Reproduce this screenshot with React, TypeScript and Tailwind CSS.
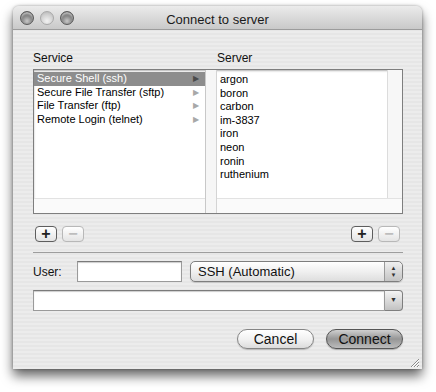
import React from 'react';

const services = [
  'Secure Shell (ssh)',
  'Secure File Transfer (sftp)',
  'File Transfer (ftp)',
  'Remote Login (telnet)',
];

const servers = ['argon', 'boron', 'carbon', 'im-3837', 'iron', 'neon', 'ronin', 'ruthenium'];

const font = { fontFamily: '"Liberation Sans", Arial, sans-serif' };

function Light() {
  return (
    <span className="block h-[14px] w-[14px] rounded-full border border-[#5a5a5a] bg-[radial-gradient(circle_at_50%_75%,#c8c8c8_0%,#7a7a7a_55%,#505050_100%)] shadow-[inset_0_2px_2px_rgba(255,255,255,0.55)]" />
  );
}

function SmallButton({ label, enabled }: { label: string; enabled: boolean }) {
  return (
    <div
      className={`flex h-[16px] w-[22px] items-center justify-center rounded-[4px] border bg-gradient-to-b from-white to-[#e4e4e4] text-[16px] font-bold leading-none ${
        enabled ? 'border-[#5e5e5e] text-[#222]' : 'border-[#b8b8b8] text-[#bdbdbd]'
      }`}
    >
      {label}
    </div>
  );
}

export default function App() {
  return (
    <div className="h-[392px] w-[436px] bg-white pl-[13px] pt-[6px]" style={font}>
      <div className="flex h-[363px] w-[409px] flex-col rounded-t-[6px] bg-[#ececec] shadow-[0_7px_12px_rgba(0,0,0,0.6),0_0_3px_rgba(0,0,0,0.35)]">
        {/* title bar */}
        <div className="relative flex h-[24px] items-center rounded-t-[6px] border-b border-[#9c9c9c] bg-gradient-to-b from-[#ebebeb] to-[#c9c9c9] px-[7px]">
          <div className="flex gap-[6px]">
            <Light />
            <span className="block h-[14px] w-[14px] rounded-full border border-[#a9a9a9] bg-[radial-gradient(circle_at_50%_75%,#f2f2f2_0%,#cfcfcf_60%,#b2b2b2_100%)]" />
            <Light />
          </div>
          <div className="absolute inset-x-0 top-[4px] text-center text-[13px] text-[#1a1a1a]">Connect to server</div>
        </div>

        {/* body */}
        <div className="flex flex-1 flex-col bg-[repeating-linear-gradient(0deg,#ececec_0px,#ececec_2px,#e6e6e6_2px,#e6e6e6_4px)] pl-[20px] pr-[19px]">
          <div className="mt-[19px] flex h-[15px] text-[12px] text-[#111]">
            <div className="w-[184px]">Service</div>
            <div>Server</div>
          </div>

          {/* table */}
          <div className="mt-[5px] flex h-[145px] border border-[#7e7e7e] bg-white shadow-[inset_0_1px_2px_rgba(0,0,0,0.3)]">
            <div className="flex w-[172px] flex-col border-r border-[#c8c8c8]">
              <div className="flex-1 pt-[2px] text-[11px] leading-[13.6px] text-black">
                {services.map((s, i) => (
                  <div
                    key={s}
                    className={`flex items-center justify-between pl-[3px] pr-[6px] ${i === 0 ? 'bg-[#8d8d8d] text-white' : ''}`}
                  >
                    <span>{s}</span>
                    <span className={`text-[8px] ${i === 0 ? 'text-[#4a4a4a]' : 'text-[#a8a8a8]'}`}>▶</span>
                  </div>
                ))}
              </div>
              <div className="h-[15px] border-t border-[#e2e2e2] bg-[#fafafa]" />
            </div>
            <div className="w-[11px] border-r border-[#d4d4d4] bg-[#f6f6f6]" />
            <div className="flex flex-1 flex-col">
              <div className="flex flex-1">
                <div className="flex-1 pl-[3px] pt-[3px] text-[11px] leading-[13.6px] text-black">
                  {servers.map((s) => (
                    <div key={s}>{s}</div>
                  ))}
                </div>
                <div className="w-[15px] border-l border-[#dcdcdc] bg-[#f7f7f7]" />
              </div>
              <div className="h-[15px] border-t border-[#e2e2e2] bg-[#fafafa]" />
            </div>
          </div>

          {/* +/- */}
          <div className="mt-[12px] flex justify-between pl-[2px] pr-[3px]">
            <div className="flex gap-[5px]">
              <SmallButton label="+" enabled />
              <SmallButton label="−" enabled={false} />
            </div>
            <div className="flex gap-[5px]">
              <SmallButton label="+" enabled />
              <SmallButton label="−" enabled={false} />
            </div>
          </div>

          <div className="mt-[10px] h-[2px] border-t border-[#9d9d9d] border-b-white" />

          {/* user row */}
          <div className="mt-[7px] flex items-center">
            <div className="w-[44px] pt-[1px] text-[12px] text-[#111]">User:</div>
            <div className="h-[21px] w-[105px] border border-[#9a9a9a] border-t-[#7a7a7a] bg-white shadow-[inset_0_1px_1px_rgba(0,0,0,0.2)]" />
            <div className="ml-[8px] flex h-[21px] flex-1 items-center rounded-[5px] border border-[#7e7e7e] bg-gradient-to-b from-white via-[#f0f0f0] to-[#dedede] shadow-[0_1px_1px_rgba(0,0,0,0.15)]">
              <span className="flex-1 pl-[7px] text-[13px] text-[#111]">SSH (Automatic)</span>
              <div className="flex h-full w-[18px] flex-col items-center justify-center rounded-r-[5px] border-l border-[#9a9a9a] bg-gradient-to-b from-[#f0f0f0] to-[#c4c4c4] text-[6px] leading-[7px] text-[#333]">
                <span>▲</span>
                <span>▼</span>
              </div>
            </div>
          </div>

          {/* combo */}
          <div className="mt-[8px] flex h-[21px]">
            <div className="flex-1 border border-[#9a9a9a] border-t-[#7a7a7a] bg-white shadow-[inset_0_1px_1px_rgba(0,0,0,0.2)]" />
            <div className="flex w-[18px] items-center justify-center rounded-r-[4px] border border-l-0 border-[#7e7e7e] bg-gradient-to-b from-[#f4f4f4] to-[#c2c2c2] text-[7px] text-[#333]">
              ▼
            </div>
          </div>

          {/* buttons */}
          <div className="mt-[18px] flex justify-end gap-[12px]">
            <div className="flex h-[20px] w-[77px] items-center justify-center rounded-full border border-[#858585] bg-gradient-to-b from-white via-[#f2f2f2] to-[#dcdcdc] text-[14px] text-[#111] shadow-[0_1px_1px_rgba(0,0,0,0.2)]">
              Cancel
            </div>
            <div className="flex h-[20px] w-[77px] items-center justify-center rounded-full border border-[#555] bg-gradient-to-b from-[#d0d0d0] via-[#969696] to-[#bcbcbc] text-[14px] text-[#111] shadow-[0_1px_1px_rgba(0,0,0,0.25)]">
              Connect
            </div>
          </div>

          {/* grip */}
          <div className="mt-auto flex justify-end pb-[1px]">
            <svg width="11" height="11" viewBox="0 0 11 11" className="mr-[-17px]">
              <path d="M10 2 L2 10 M10 5 L5 10 M10 8 L8 10" stroke="#8a8a8a" strokeWidth="1" />
              <path d="M10 3 L3 10 M10 6 L6 10 M10 9 L9 10" stroke="#fff" strokeWidth="1" />
            </svg>
          </div>
        </div>
      </div>
    </div>
  );
}
